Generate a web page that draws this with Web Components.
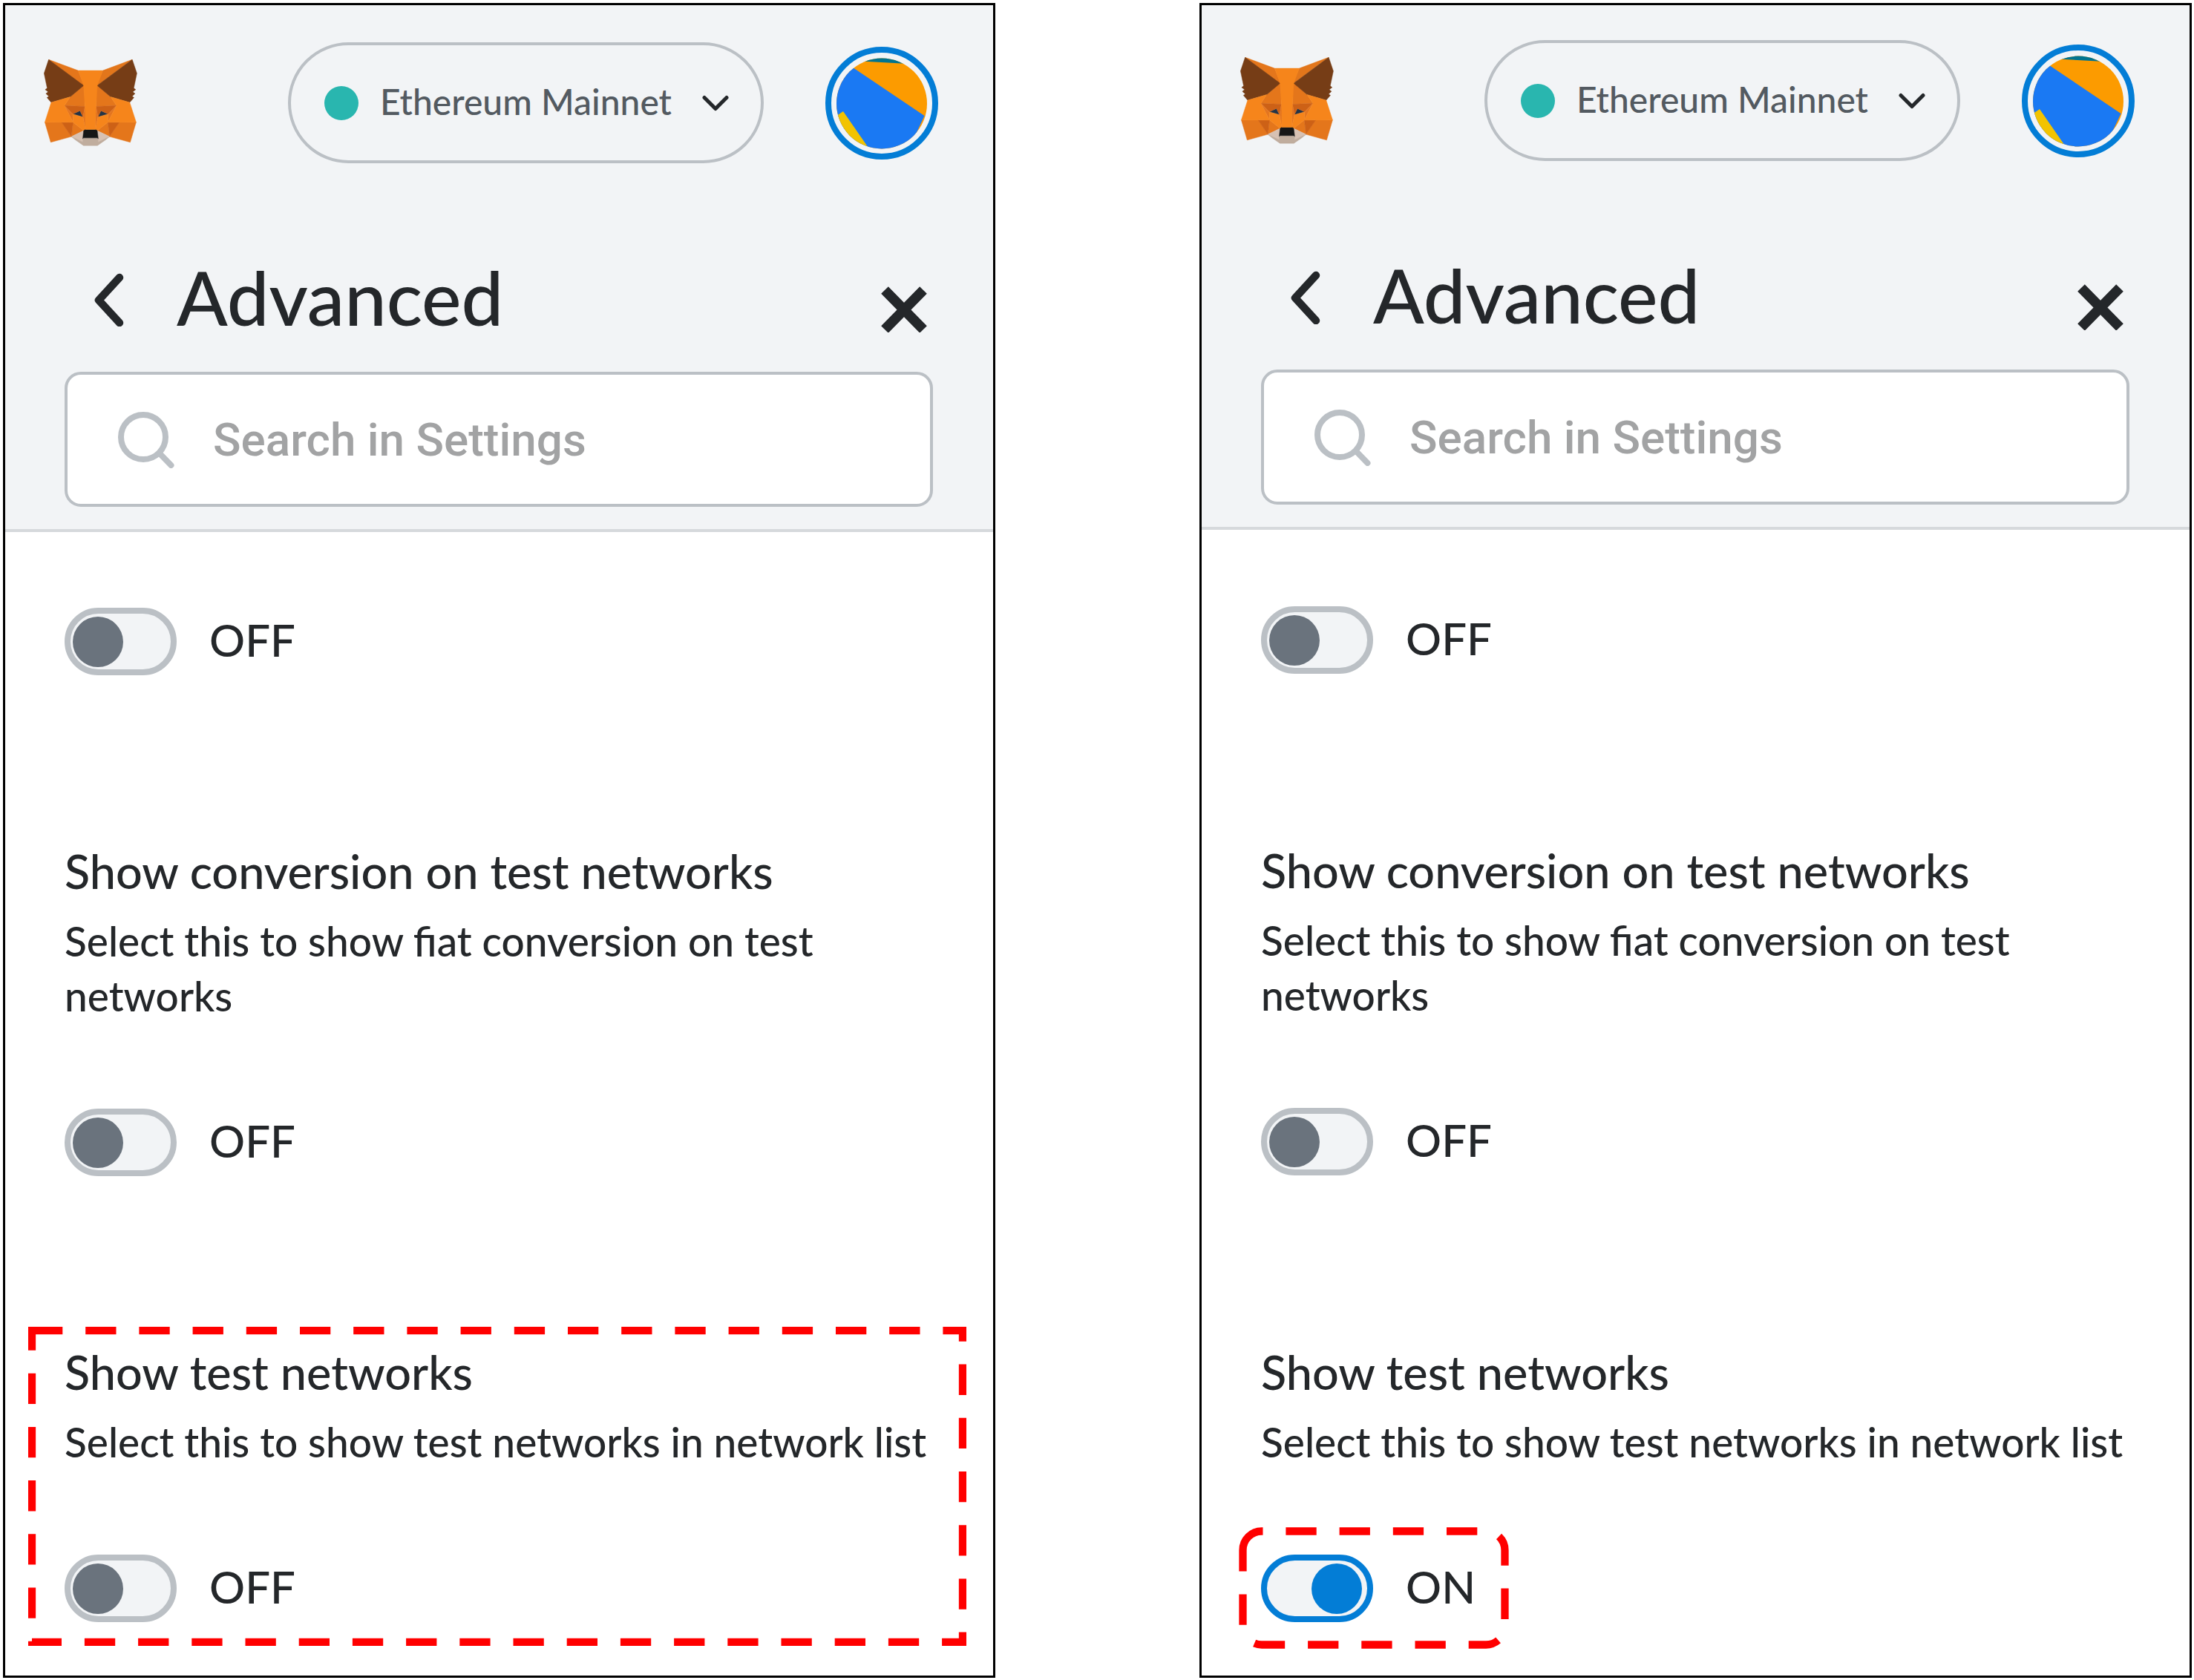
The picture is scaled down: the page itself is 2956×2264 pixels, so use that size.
<!DOCTYPE html>
<html lang="en">
<head>
<meta charset="utf-8">
<meta name="viewport" content="width=device-width, initial-scale=1">
<title>MetaMask settings: show test networks</title>
<style>
  body { margin: 0; background: #fff; font-family: Lato, "Liberation Sans", sans-serif; font-weight: 500; color: #24272a; }
  main { display: grid; grid-template-columns: 1fr 1fr; column-gap: 275px; padding: 4px 3px 2px 4px; }
  wallet-panel.after { --bar-top: 47px; --body-top: 103px; --setting-gap: 226px; }
</style>
</head>
<body>
<main>
  <wallet-panel>
    <setting-item></setting-item>
    <setting-item heading="Show conversion on test networks">Select this to show fiat conversion on test networks</setting-item>
    <setting-item heading="Show test networks" marked="item">Select this to show test networks in network list</setting-item>
  </wallet-panel>
  <wallet-panel class="after">
    <setting-item></setting-item>
    <setting-item heading="Show conversion on test networks">Select this to show fiat conversion on test networks</setting-item>
    <setting-item heading="Show test networks" on marked="toggle">Select this to show test networks in network list</setting-item>
  </wallet-panel>
</main>
<script>
const define = (name, html, setup) => {
  const template = document.createElement('template');
  template.innerHTML = '<style>*{box-sizing:border-box}button{font:inherit;color:inherit;background:none;border:0;padding:0;cursor:pointer}svg{display:block}</style>' + html;
  customElements.define(name, class extends HTMLElement {
    connectedCallback() {
      if (this.shadowRoot) return;
      const root = this.attachShadow({ mode: 'open' });
      root.append(template.content.cloneNode(true));
      if (setup) setup(this, root);
    }
  });
};

const foxFacets = [
  ['#e2761b', '274.1,35.5 174.6,109.4 193,65.8'],
  ['#e4761b', '44.4,35.5 143.1,110.1 125.6,65.8'],
  ['#e4761b', '238.3,206.8 211.8,247.4 268.5,263 284.8,207.7'],
  ['#e4761b', '33.9,207.7 50.1,263 106.8,247.4 80.3,206.8'],
  ['#e4761b', '103.6,138.2 87.8,162.1 144.1,164.6 142.1,104.1'],
  ['#e4761b', '214.9,138.2 175.9,103.4 174.6,164.6 230.8,162.1'],
  ['#e4761b', '106.8,247.4 140.6,230.9 111.4,208.1'],
  ['#e4761b', '177.9,230.9 211.8,247.4 207.1,208.1'],
  ['#d7c1b3', '211.8,247.4 177.9,230.9 180.6,253 180.3,262.3'],
  ['#d7c1b3', '106.8,247.4 138.3,262.3 138.1,253 140.6,230.9'],
  ['#233447', '138.8,193.5 110.6,185.2 130.5,176.1'],
  ['#233447', '179.7,193.5 188,176.1 208,185.2'],
  ['#cd6116', '106.8,247.4 111.6,206.8 80.3,207.7'],
  ['#cd6116', '207,206.8 211.8,247.4 238.3,207.7'],
  ['#cd6116', '230.8,162.1 174.6,164.6 179.8,193.5 188.1,176.1 208.1,185.2'],
  ['#cd6116', '110.6,185.2 130.6,176.1 138.8,193.5 144.1,164.6 87.8,162.1'],
  ['#e4751f', '87.8,162.1 111.4,208.1 110.6,185.2'],
  ['#e4751f', '208.1,185.2 207.1,208.1 230.8,162.1'],
  ['#e4751f', '144.1,164.6 138.8,193.5 145.4,227.6 146.9,182.7'],
  ['#e4751f', '174.6,164.6 171.9,182.6 173.1,227.6 179.8,193.5'],
  ['#f6851b', '179.8,193.5 173.1,227.6 177.9,230.9 207.1,208.1 208.1,185.2'],
  ['#f6851b', '110.6,185.2 111.4,208.1 140.6,230.9 145.4,227.6 138.8,193.5'],
  ['#c0ad9e', '180.3,262.3 180.6,253 178.1,250.8 140.4,250.8 138.1,253 138.3,262.3 106.8,247.4 117.8,256.4 140.1,271.9 178.4,271.9 200.8,256.4 211.8,247.4'],
  ['#161616', '177.9,230.9 173.1,227.6 145.4,227.6 140.6,230.9 138.1,253 140.4,250.8 178.1,250.8 180.6,253'],
  ['#763d16', '278.3,114.2 286.8,73.4 274.1,35.5 177.9,106.9 214.9,138.2 267.2,153.5 278.8,140 273.8,136.4 281.8,129.1 275.6,124.3 283.6,118.2'],
  ['#763d16', '31.8,73.4 40.3,114.2 34.9,118.2 42.9,124.3 36.8,129.1 44.8,136.4 39.8,140 51.3,153.5 103.6,138.2 140.6,106.9 44.4,35.5'],
  ['#f6851b', '267.2,153.5 214.9,138.2 230.8,162.1 207.1,208.1 238.3,207.7 284.8,207.7'],
  ['#f6851b', '103.6,138.2 51.3,153.5 33.9,207.7 80.3,207.7 111.4,208.1 87.8,162.1'],
  ['#f6851b', '174.6,164.6 177.9,106.9 193.1,65.8 125.6,65.8 140.6,106.9 144.1,164.6 145.3,182.8 145.4,227.6 173.1,227.6 173.3,182.8']
];

define('fox-logo', `
  <style>:host{display:block;flex:none;width:126px}</style>
  <svg viewBox="31 35 257 238" role="img" aria-label="MetaMask" stroke-linejoin="round">
    ${foxFacets.map(([c, p]) => `<polygon fill="${c}" stroke="${c}" points="${p}"/>`).join('')}
  </svg>`);

define('network-picker', `
  <style>
    :host{display:block;flex:none}
    button{display:flex;align-items:center;height:163px;padding:0 43px 0 45px;border:4px solid #bbc0c5;border-radius:82px;color:#535a61;font-size:48px;line-height:56px}
    .dot{width:46px;height:46px;border-radius:50%;background:#29b6af;margin-right:29px}
    .name{padding-bottom:4px;margin-right:41px}
  </style>
  <button type="button" aria-haspopup="listbox"><span class="dot"></span><span class="name"><slot></slot></span>
    <svg width="36" height="22" viewBox="0 0 36 22" fill="none" stroke="#24272a" stroke-width="5" stroke-linecap="round" stroke-linejoin="round"><path d="M3 3.5 18 18.5 33 3.5"/></svg>
  </button>`);

define('account-avatar', `
  <style>:host{display:block;flex:none}button{display:block;border-radius:50%}</style>
  <button type="button" aria-label="Account">
    <svg width="152" height="152" viewBox="0 0 152 152">
      <defs><clipPath id="disc"><circle cx="76" cy="76.500" r="61"/></clipPath></defs>
      <circle cx="76" cy="76" r="72" fill="none" stroke="#037dd6" stroke-width="8"/>
      <g clip-path="url(#disc)">
        <path fill="#fc9b00" d="M0 0H152V152H0Z"/>
        <path fill="#01748f" d="M40 0H120V23.500L40 19Z"/>
        <path fill="#1a79f3" d="M-4.500 0 133.500 93 106 152H-4.500Z"/>
        <path fill="#f2c300" d="M24 87 8 98V152H69Z"/>
      </g>
    </svg>
  </button>`);

define('search-box', `
  <style>
    :host{display:block}
    label{display:flex;align-items:center;height:182px;padding:0 40px 0 68px;gap:52px;background:#fff;border:4px solid #bbc0c5;border-radius:22px}
    svg{flex:none}
    input{flex:1;min-width:0;height:100%;padding:0;border:0;outline:0;background:none;color:#24272a;font:500 62px Roboto,"Liberation Sans",sans-serif}
    input::placeholder{color:#a2a3a4;opacity:1}
  </style>
  <label>
    <svg width="76" height="78" viewBox="0 0 76 78" fill="none" stroke="#bbc0c5" stroke-width="8" stroke-linecap="round"><circle cx="34" cy="36" r="30"/><path d="M56 58 71.500 74"/></svg>
    <input type="text" placeholder="Search in Settings" aria-label="Search in Settings">
  </label>`);

define('wallet-panel', `
  <style>
    :host{display:block;border:3px solid #000;background:#fff}
    header{background:#f2f4f6;border-bottom:4px solid #d6d9dc;padding-bottom:30px}
    .bar{display:flex;align-items:center;padding:var(--bar-top,50px) 74px 0 52px}
    network-picker{margin-left:auto;margin-right:83px}
    .title{display:flex;align-items:center;padding:120px 89px 41px 120px}
    h1{flex:1;margin:0 0 0 71px;font-size:101px;line-height:120px;font-weight:500}
    search-box{margin:0 81px 0 80px}
    .body{display:flex;flex-direction:column;gap:var(--setting-gap,225px);padding:var(--body-top,102px) 81px 72px 80px}
  </style>
  <header>
    <div class="bar"><fox-logo></fox-logo><network-picker>Ethereum Mainnet</network-picker><account-avatar></account-avatar></div>
    <div class="title">
      <button type="button" aria-label="Back"><svg width="40" height="80" viewBox="0 0 40 80" fill="none" stroke="#24272a" stroke-width="10.500" stroke-linecap="round" stroke-linejoin="round"><path d="M34 14 6 44.500 34 75"/></svg></button>
      <h1>Advanced</h1>
      <button type="button" aria-label="Close"><svg width="62" height="96" viewBox="0 0 62 96" fill="none" stroke="#24272a" stroke-width="13.500"><path d="M5 39 57 92M57 39 5 92"/></svg></button>
    </div>
    <search-box></search-box>
  </header>
  <div class="body"><slot></slot></div>`);

define('toggle-switch', `
  <style>
    :host{display:block}
    label{display:flex;align-items:flex-start;gap:44px;height:91px;font-size:60px;line-height:87px}
    input{appearance:none;display:flex;align-items:center;flex:none;width:151px;height:91px;margin:0;padding:0 7px 0 3px;border:8px solid #bbc0c5;border-radius:46px;background:#f2f4f6}
    input::before{content:"";width:68px;height:68px;border-radius:50%;background:#6a737d}
    input:checked{border-color:#037dd6;justify-content:flex-end}
    input:checked::before{background:#037dd6}
  </style>
  <label><input type="checkbox" role="switch"><span></span></label>`,
  (host, root) => {
    const input = root.querySelector('input');
    const text = root.querySelector('span');
    const update = () => { text.textContent = input.checked ? 'ON' : 'OFF'; };
    input.checked = host.hasAttribute('on');
    input.addEventListener('change', update);
    update();
  });

define('setting-item', `
  <style>
    :host{display:block}
    .item,.control{position:relative}
    .control{display:block;width:fit-content}
    h2{margin:0 0 18px;font-size:63px;line-height:78px;font-weight:500}
    p{margin:0 0 115px;font-size:55px;line-height:74px}
    .mark{position:absolute;display:none;fill:none;stroke:#f00;stroke-width:10.300;stroke-dasharray:41.300 30.900;pointer-events:none}
    .item>.mark{left:-49px;top:-22px;width:1264px;height:430px}
    .control>.mark{left:-30px;top:-37px;width:364px;height:164px}
    :host([marked="item"]) .item>.mark,:host([marked="toggle"]) .control>.mark{display:block}
  </style>
  <div class="item">
    <div class="copy"><h2></h2><p><slot></slot></p></div>
    <div class="control">
      <toggle-switch></toggle-switch>
      <svg class="mark" viewBox="0 0 364 164" aria-hidden="true"><path d="M5.500 31A25.500 25.500 0 0 1 31 5.500H333A25.500 25.500 0 0 1 358.500 31V133A25.500 25.500 0 0 1 333 158.500H31A25.500 25.500 0 0 1 5.500 133Z"/></svg>
    </div>
    <svg class="mark" viewBox="0 0 1264 430" aria-hidden="true"><path d="M5 5H1259V425H5Z"/></svg>
  </div>`,
  (host, root) => {
    const heading = host.getAttribute('heading');
    if (heading) root.querySelector('h2').textContent = heading;
    else root.querySelector('.copy').remove();
    if (host.hasAttribute('on')) {
      const lit = document.createElement('toggle-switch');
      lit.setAttribute('on', '');
      root.querySelector('toggle-switch').replaceWith(lit);
    }
  });
</script>
</body>
</html>
